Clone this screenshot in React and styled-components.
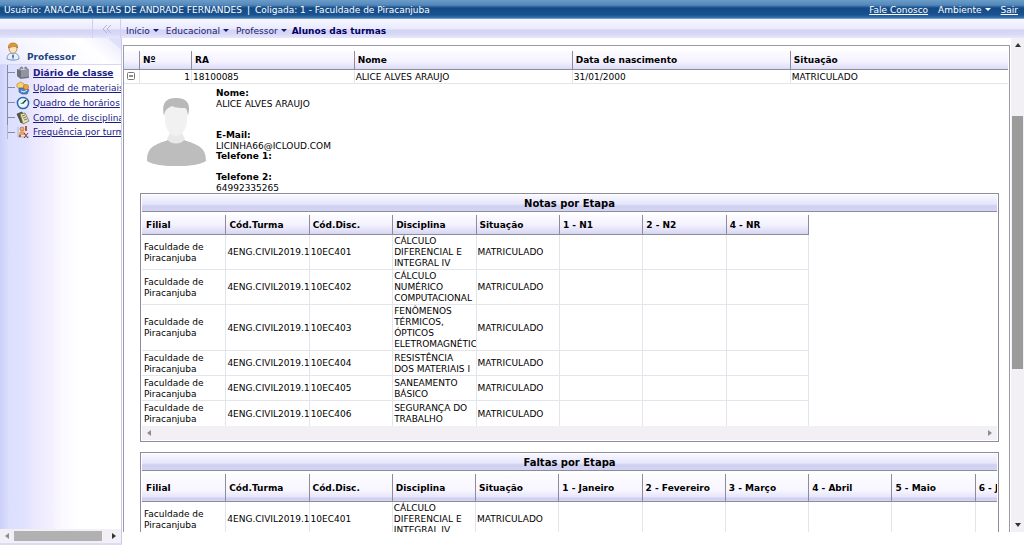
import React from 'react'
import styled, { createGlobalStyle } from 'styled-components'

const GlobalStyle = createGlobalStyle`
  * {
    box-sizing: border-box;
  }
  body {
    margin: 0;
    background: #fff;
    color: #000;
    font-family: "DejaVu Sans", Verdana, sans-serif;
    font-size: 9px;
    line-height: 10px;
  }
  button {
    font: inherit;
    color: inherit;
    background: none;
    border: 0;
    padding: 0;
    cursor: pointer;
  }
`

const Page = styled.div`
  height: 100vh;
  display: flex;
  flex-direction: column;
  overflow: hidden;
`

const TopBar = styled.header`
  flex: none;
  height: 19px;
  padding: 0 6px 0 4px;
  display: flex;
  align-items: center;
  justify-content: space-between;
  color: #fff;
  background: linear-gradient(#6a9cc8 0, #5588bb 5px, #134a85 8px, #1a5391 15px, #3f78ae 18px, #a9c4dd 19px);
`

const UserInfo = styled.span`
  display: flex;
  gap: 5px;
`

const TopLinks = styled.nav`
  display: flex;
  align-items: center;
  gap: 10px;

  a {
    color: #fff;
  }
`

const NavBar = styled.div`
  flex: none;
  height: 19px;
  display: flex;
  background: linear-gradient(#f8f8ff 0, #e9e9fd 10px, #d3d3f4 11px, #d8d8f6 15px, #e8e8fc 19px);
`

const CollapseSlot = styled.div`
  width: 121px;
  display: flex;
  justify-content: flex-end;
  border-right: 1px solid #d0d0ee;
`

const CollapseButton = styled.button`
  width: 28px;
  border-left: 1px solid #d0d0ee;
  display: flex;
  align-items: center;
  justify-content: center;
`

const Crumbs = styled.nav`
  display: flex;
  align-items: center;
  gap: 7px;
  padding: 4px 5px 0;
  color: #1a1a6e;
`

const MenuButton = styled.button`
  display: flex;
  align-items: center;
  gap: 3px;
`

const CurrentPage = styled.strong`
  margin-left: -2px;
  color: #000066;
`

const Caret = styled.i`
  border: 3px solid transparent;
  border-top-color: currentColor;
  border-bottom: 0;
`

const Body = styled.div`
  flex: 1;
  min-height: 0;
  display: flex;
`

const Sidebar = styled.aside`
  flex: none;
  width: 122px;
  margin-bottom: 7px;
  display: flex;
  flex-direction: column;
  overflow: hidden;
  border-right: 1px solid #c9c9ec;
  border-bottom: 2px solid #dcdcf8;
  background: linear-gradient(90deg, #ccd0fa 0, #dde0fd 10px, #e0e2fe 26px, #ebe8fe 34px, #f2effe 50px, #fbf9ff 62px, #fff 80px);
`

const SideHeading = styled.h2`
  flex: none;
  height: 27px;
  margin: 0;
  padding: 4px 0 0 6px;
  display: flex;
  align-items: flex-start;
  gap: 6px;
  font-size: 9px;
  color: #1f4480;
  background: linear-gradient(40deg, #e4e6fe 0, #f6f6ff 30px, #fff 70px, #f0f0fe 88px, #dfe0fa 90px);
  border-bottom: 1px solid #d8d8f4;

  span {
    margin-top: 10px;
  }
`

const Tree = styled.ul`
  flex: 1;
  min-height: 0;
  list-style: none;
  margin: 0;
  padding: 0 0 0 7px;
`

const TreeItem = styled.li`
  display: grid;
  grid-template-columns: 7px 14px auto;
  column-gap: 1px;
  align-items: center;
  justify-content: start;
  height: 15px;
  white-space: nowrap;
  border-left: 1px solid #8a8aa8;

  &:last-child {
    height: 14px;
    border-left-color: #b4b4cc;
  }

  &::before {
    content: '';
    border-top: 1px solid #8a8aa8;
  }

  a {
    margin-left: 2px;
    color: #1c1c86;
    font-weight: ${(p) => (p.$active ? 'bold' : 'normal')};
  }
`

const ScrollBar = styled.div`
  flex: none;
  display: flex;
  flex-direction: ${(p) => (p.$vertical ? 'column' : 'row')};
  align-items: center;
  width: ${(p) => (p.$vertical ? '13px' : 'auto')};
  height: ${(p) => (p.$vertical ? 'auto' : '14px')};
  background: #f3f0f5;
`

const VerticalTrack = styled(ScrollBar)`
  margin-bottom: 20px;
`

const ScrollButton = styled.button`
  flex: none;
  width: 14px;
  height: 14px;
  display: flex;
  align-items: center;
  justify-content: center;
  color: ${(p) => (p.$dim ? '#8c8c8c' : '#333')};
`

const Thumb = styled.div`
  flex: ${(p) => p.$size};
  background: ${(p) => p.$color};
  align-self: stretch;
  margin: ${(p) => (p.$vertical ? '0 1px' : '2px 0')};
`

const Gap = styled.div`
  flex: ${(p) => p.$size};
`

const Content = styled.main`
  flex: 1;
  min-width: 0;
  margin-bottom: 20px;
  padding: 7px 1px 0 1px;
  overflow: hidden;
`

const Frame = styled.div`
  border: 1px solid #9a9aa6;
  padding: 5px 1px 0 0;
`

const tableHead = `
  text-align: left;
  font-weight: bold;
  border-left: 1px solid #8c8c9c;
  border-bottom: 1px solid #8c8c9c;
`

const StudentTable = styled.table`
  width: 100%;
  table-layout: fixed;
  border-spacing: 0;
  white-space: nowrap;

  th {
    ${tableHead}
    height: 19px;
    padding: 0 3px;
    background: linear-gradient(#fcfbff, #f6f3ff 10px, #dcdcf8);
  }
  td {
    height: 14px;
    padding: 0 1px;
    border-left: 1px solid #e4e4ec;
    border-bottom: 1px solid #e4e4ec;
  }
  th:first-child,
  td:first-child {
    border-left: 0;
  }
`

const NumberCell = styled.td`
  text-align: right;
`

const ExpandButton = styled.button`
  display: block;
  margin-left: 2px;
`

const Detail = styled.section`
  padding: 4px 9px 0 16px;
`

const Profile = styled.div`
  display: flex;
  gap: 10px;
  height: 105px;
`

const Contact = styled.dl`
  margin: 0;

  dt {
    font-weight: bold;
    line-height: 11px;
  }
  dd {
    margin: 0;
    min-height: 10px;
  }
  dd:nth-of-type(1) {
    margin-bottom: 21px;
  }
`

const Panel = styled.section`
  margin-bottom: 10px;
  padding: 1px;
  border: 1px solid #8c8c9c;
`

const PanelTitle = styled.h3`
  height: 17px;
  margin: 0;
  line-height: 17px;
  font-size: 10px;
  text-align: center;
  border-bottom: 1px solid #8c8c9c;
  background: linear-gradient(#f8f7ff 0, #e6e6fc 9px, #cfcff0 11px, #d4d4f3 16px);
`

const TableScroll = styled.div`
  overflow: hidden;
  padding-top: 3px;
`

const StageTable = styled.table`
  table-layout: fixed;
  width: ${(p) => p.$width}px;
  border-spacing: 0;

  th {
    ${tableHead}
    height: ${(p) => (p.$tall ? 28 : 20)}px;
    padding: 0 3px;
    background: ${(p) =>
      p.$tall
        ? 'linear-gradient(#fdfcff 0, #f8f6ff 16px, #e6e5fa 23px, #cfcff0 24px, #d4d4f3 27px)'
        : 'linear-gradient(#fdfcff 0, #f3f1fe 10px, #d6d6f3 19px)'};
  }
  th:first-child {
    padding-left: 4px;
  }
  th:last-child {
    border-right: 1px solid #8c8c9c;
  }
  td {
    height: 25px;
    padding: 1px 0 0 1px;
    line-height: 11px;
    overflow: hidden;
    border-left: 1px solid #e4e4ec;
    border-bottom: 1px solid #e4e4ec;
  }
  td:last-child {
    border-right: 1px solid #e4e4ec;
  }
  th:first-child,
  td:first-child {
    border-left: 0;
  }
  td:first-child {
    padding-left: 2px;
  }
  tr:last-child td {
    border-bottom: 0;
  }
`

const Lines = styled.div`
  white-space: pre;
`

const Arrow = ({ turn = 0 }) => (
  <svg width="6" height="6" viewBox="0 0 6 6" aria-hidden="true">
    <path d="M3 1L6 5H0Z" fill="currentColor" transform={`rotate(${turn} 3 3)`} />
  </svg>
)

const PersonIcon = () => (
  <svg width="15" height="19" viewBox="0 0 15 19" aria-hidden="true">
    <path d="M1 17c0-4 2-6 6-6s6 2 6 6c-3 1.500-9 1.500-12 0z" fill="#e9f0fb" stroke="#5e7cab" strokeWidth=".8" />
    <path d="M7 12l-1 2 1 4 1-4z" fill="#2463bd" />
    <ellipse cx="7" cy="6.500" rx="4" ry="4.800" fill="#fbe3bd" stroke="#a86b28" strokeWidth=".7" />
    <path d="M2.500 6C2 2 4.500 1 7 1s5 1 4.500 5C10 3.500 6 4.500 2.500 6z" fill="#e09a30" stroke="#8c5718" strokeWidth=".5" />
  </svg>
)

const FolderIcon = () => (
  <svg width="14" height="14" viewBox="0 0 14 14" aria-hidden="true">
    <path d="M1 3l4 1 8-1v9l-8 1-4-3z" fill="#92949e" />
    <path d="M1 3l4 2v8l-4-3z" fill="#6c6e78" />
    <path d="M4 4V2l2-1 1 2M9 3V1l2 1v2" stroke="#5c5e68" fill="#b4b5bd" strokeWidth=".8" />
    <path d="M5 12l8-1" stroke="#5f616b" strokeWidth=".8" />
  </svg>
)

const UploadIcon = () => (
  <svg width="14" height="14" viewBox="0 0 14 14" aria-hidden="true">
    <path d="M1 3l4-2 3 2v4L4 8 1 6z" fill="#f8d46a" stroke="#b67a20" strokeWidth=".6" />
    <path d="M3 7h8l2 2-2 4H6L3 11z" fill="#4f83cf" stroke="#234d92" strokeWidth=".6" />
    <circle cx="10" cy="6" r="2.600" fill="#f4a52d" stroke="#a75a12" strokeWidth=".5" />
    <path d="M5 10l3 1 3-2" stroke="#e3efff" fill="none" />
  </svg>
)

const ClockIcon = () => (
  <svg width="14" height="14" viewBox="0 0 14 14" aria-hidden="true">
    <circle cx="7" cy="7" r="5.600" fill="#e6f5ff" stroke="#2a66a8" strokeWidth="1.500" />
    <path d="M7 7l3-3" stroke="#223" strokeWidth="1.200" />
    <path d="M4 8l3-2 1 2z" fill="#3f9a48" />
  </svg>
)

const BookIcon = () => (
  <svg width="14" height="14" viewBox="0 0 14 14" aria-hidden="true">
    <path d="M1 3l5-2 3 9-4 2z" fill="#4d5a3c" stroke="#2e3428" strokeWidth=".6" />
    <path d="M4 3l5-1 4 8-6 3z" fill="#e8dfb4" stroke="#6b633c" strokeWidth=".7" />
    <path d="M6 5l3-1M7 7l3-1M8 9l3-1" stroke="#5a6a4a" strokeWidth=".8" />
  </svg>
)

const ChartIcon = () => (
  <svg width="14" height="14" viewBox="0 0 14 14" aria-hidden="true">
    <path d="M2 2v10h11" stroke="#9aa6bf" strokeWidth=".7" fill="none" />
    <path d="M3 9h2v3H3zM9 1h2v5H9z" fill="#c94c37" />
    <circle cx="6" cy="4" r="2" fill="#eeb068" stroke="#8a4b1c" strokeWidth=".5" />
    <path d="M3 10c0-3 1-4 3-4s3 1 4 4z" fill="#e5a25e" />
    <path d="M8 8l4 5M12 8l-4 5" stroke="#7c3a34" />
  </svg>
)

const ExpandedIcon = () => (
  <svg width="8" height="8" viewBox="0 0 8 8" aria-hidden="true">
    <rect x=".5" y=".5" width="7" height="7" rx="1" fill="#fff" stroke="#777" />
    <path d="M2 4h4" stroke="#222" />
  </svg>
)

const Avatar = () => (
  <svg width="66" height="78" viewBox="0 -4 66 78" role="img" aria-label="Foto do aluno">
    <path d="M7 69c0-14 7-16 21-21h16c14 5 22 7 22 21-10 7-49 7-59 0z" fill="#bdbdbd" />
    <path d="M27 47c4 6 14 6 18 0l-3-6H30z" fill="#e9e9e9" />
    <path d="M25 20c0-10 22-10 22 0v10c-1 8-6 14-11 14s-10-6-11-14z" fill="#f1f1f1" />
    <path d="M24 24C21 10 27 6 36 6s16 4 12 18c-1-5-1-7-3-8-4 0-9 0-13-2-4 2-7 3-8 10z" fill="#b9b9b9" />
  </svg>
)

const sideLinks = [
  { title: 'Diário de classe', icon: FolderIcon, active: true },
  { title: 'Upload de materiais', icon: UploadIcon },
  { title: 'Quadro de horários', icon: ClockIcon },
  { title: 'Compl. de disciplina', icon: BookIcon },
  { title: 'Frequência por turma', icon: ChartIcon },
]

const subjects = [
  { code: '10EC401', name: ['CÁLCULO', 'DIFERENCIAL E', 'INTEGRAL IV'] },
  { code: '10EC402', name: ['CÁLCULO', 'NUMÉRICO', 'COMPUTACIONAL'] },
  { code: '10EC403', name: ['FENÔMENOS', 'TÉRMICOS,', 'ÓPTICOS', 'ELETROMAGNÉTIC'] },
  { code: '10EC404', name: ['RESISTÊNCIA', 'DOS MATERIAIS I'] },
  { code: '10EC405', name: ['SANEAMENTO', 'BÁSICO'] },
  { code: '10EC406', name: ['SEGURANÇA DO', 'TRABALHO'] },
]

const baseColumns = ['Filial', 'Cód.Turma', 'Cód.Disc.', 'Disciplina', 'Situação']
const gradeColumns = ['1 - N1', '2 - N2', '4 - NR']
const monthColumns = ['1 - Janeiro', '2 - Fevereiro', '3 - Março', '4 - Abril', '5 - Maio', '6 - Junho']

const StagePanel = ({ title, columns, tall, rows, children }) => {
  const all = [...baseColumns, ...columns]
  return (
    <Panel>
      <PanelTitle>{title}</PanelTitle>
      <TableScroll>
        <StageTable $tall={tall} $width={all.length * 83 + 3}>
          <thead>
            <tr>
              {all.map((c) => (
                <th key={c} scope="col">{c}</th>
              ))}
            </tr>
          </thead>
          <tbody>
            {rows.map((s) => (
              <tr key={s.code}>
                <td><Lines>{'Faculdade de\nPiracanjuba'}</Lines></td>
                <td>4ENG.CIVIL2019.1</td>
                <td>{s.code}</td>
                <td><Lines>{s.name.join('\n')}</Lines></td>
                <td>MATRICULADO</td>
                {columns.map((c) => (
                  <td key={c} />
                ))}
              </tr>
            ))}
          </tbody>
        </StageTable>
      </TableScroll>
      {children}
    </Panel>
  )
}

const App = () => (
  <>
    <GlobalStyle />
    <Page>
      <TopBar>
        <UserInfo>
          <span>Usuário: ANACARLA ELIAS DE ANDRADE FERNANDES</span>
          <span>|</span>
          <span>Coligada: 1 - Faculdade de Piracanjuba</span>
        </UserInfo>
        <TopLinks>
          <a href="#contato">Fale Conosco</a>
          <MenuButton>Ambiente <Caret /></MenuButton>
          <a href="#sair">Sair</a>
        </TopLinks>
      </TopBar>
      <NavBar>
        <CollapseSlot>
          <CollapseButton aria-label="Recolher menu">
            <svg width="10" height="10" viewBox="0 0 10 10" fill="none" stroke="#b4b4d8">
              <path d="M5 1L1 5l4 4M9 1L5 5l4 4" />
            </svg>
          </CollapseButton>
        </CollapseSlot>
        <Crumbs>
          <MenuButton>Início <Caret /></MenuButton>
          <MenuButton>Educacional <Caret /></MenuButton>
          <MenuButton>Professor <Caret /></MenuButton>
          <CurrentPage>Alunos das turmas</CurrentPage>
        </Crumbs>
      </NavBar>
      <Body>
        <Sidebar>
          <SideHeading>
            <PersonIcon />
            <span>Professor</span>
          </SideHeading>
          <Tree>
            {sideLinks.map((item) => {
              const Icon = item.icon
              return (
                <TreeItem key={item.title} $active={item.active}>
                  <Icon />
                  <a href="#menu">{item.title}</a>
                </TreeItem>
              )
            })}
          </Tree>
          <ScrollBar>
            <ScrollButton $dim aria-label="Rolar para a esquerda"><Arrow turn={-90} /></ScrollButton>
            <Thumb $size={88} $color="#b1b1b1" />
            <Gap $size={5} />
            <ScrollButton aria-label="Rolar para a direita"><Arrow turn={90} /></ScrollButton>
          </ScrollBar>
        </Sidebar>
        <Content>
          <Frame>
            <StudentTable>
              <colgroup>
                <col style={{ width: 15 }} />
                <col style={{ width: 52 }} />
                <col style={{ width: '18.4%' }} />
                <col />
                <col />
                <col />
              </colgroup>
              <thead>
                <tr>
                  <th aria-label="Detalhes" />
                  <th scope="col">Nº</th>
                  <th scope="col">RA</th>
                  <th scope="col">Nome</th>
                  <th scope="col">Data de nascimento</th>
                  <th scope="col">Situação</th>
                </tr>
              </thead>
              <tbody>
                <tr>
                  <td><ExpandButton aria-label="Recolher detalhes"><ExpandedIcon /></ExpandButton></td>
                  <NumberCell>1</NumberCell>
                  <td>18100085</td>
                  <td>ALICE ALVES ARAUJO</td>
                  <td>31/01/2000</td>
                  <td>MATRICULADO</td>
                </tr>
              </tbody>
            </StudentTable>
            <Detail>
              <Profile>
                <Avatar />
                <Contact>
                  <dt>Nome:</dt>
                  <dd>ALICE ALVES ARAUJO</dd>
                  <dt>E-Mail:</dt>
                  <dd>LICINHA66@ICLOUD.COM</dd>
                  <dt>Telefone 1:</dt>
                  <dd />
                  <dt>Telefone 2:</dt>
                  <dd>64992335265</dd>
                </Contact>
              </Profile>
              <StagePanel title="Notas por Etapa" columns={gradeColumns} rows={subjects}>
                <ScrollBar>
                  <ScrollButton $dim aria-label="Rolar notas para a esquerda"><Arrow turn={-90} /></ScrollButton>
                  <Gap $size={1} />
                  <ScrollButton $dim aria-label="Rolar notas para a direita"><Arrow turn={90} /></ScrollButton>
                </ScrollBar>
              </StagePanel>
              <StagePanel title="Faltas por Etapa" columns={monthColumns} rows={subjects.slice(0, 1)} tall />
            </Detail>
          </Frame>
        </Content>
        <VerticalTrack $vertical>
          <ScrollButton aria-label="Rolar para cima"><Arrow /></ScrollButton>
          <Gap $size={64} />
          <Thumb $vertical $size={253} $color="#9b9b9b" />
          <Gap $size={149} />
          <ScrollButton aria-label="Rolar para baixo"><Arrow turn={180} /></ScrollButton>
        </VerticalTrack>
      </Body>
    </Page>
  </>
)

export default App
